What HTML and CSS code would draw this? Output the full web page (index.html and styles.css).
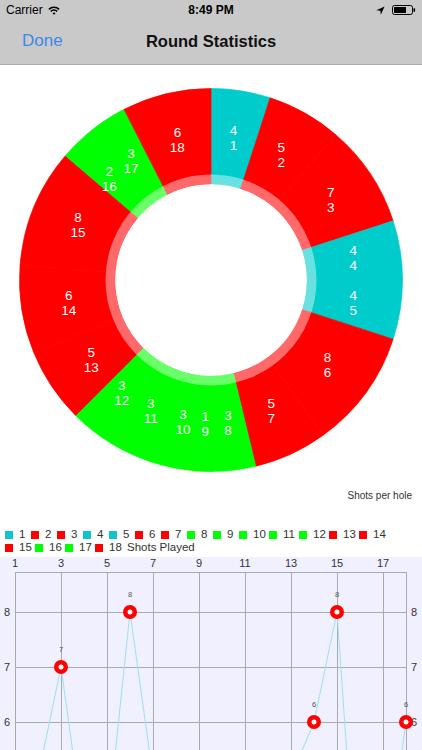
FILE: index.html
```html
<!DOCTYPE html>
<html lang="en">
<head>
<meta charset="utf-8">
<title>Round Statistics</title>
<link rel="stylesheet" href="styles.css">
</head>
<body>
<div class="screen">
  <div class="statusbar">
    <div class="sb-left">
      <span>Carrier</span>
      <svg class="wifi" width="12" height="9" viewBox="0 0 12 9">
        <path d="M0.9 3.4 A7.4 7.4 0 0 1 11.1 3.4" fill="none" stroke="#000" stroke-width="1.5"/>
        <path d="M2.8 5.4 A4.6 4.6 0 0 1 9.2 5.4" fill="none" stroke="#000" stroke-width="1.5"/>
        <path d="M4.5 7.2 L6 8.8 L7.5 7.2 A2.1 2.1 0 0 0 4.5 7.2 Z" fill="#000"/>
      </svg>
    </div>
    <div class="sb-time">8:49 PM</div>
    <div class="sb-right">
      <svg class="loc" width="9" height="9" viewBox="0 0 9 9">
        <path d="M0.3 4.2 L8.6 0.4 L4.8 8.7 L4.3 4.7 Z" fill="#000"/>
      </svg>
      <svg class="battery" width="24" height="10" viewBox="0 0 24 10">
        <rect x="0.5" y="0.5" width="20" height="9" rx="2" fill="none" stroke="#000" stroke-width="1"/>
        <rect x="2" y="2" width="12" height="6" fill="#000"/>
        <rect x="21.5" y="3.3" width="1.6" height="3.4" fill="#000"/>
      </svg>
    </div>
  </div>
  <div class="navbar">
    <span class="nav-done">Done</span>
    <h1 class="nav-title">Round Statistics</h1>
    <span></span>
  </div>

  <div class="donut-area">
    <svg id="donut" width="422" height="424" viewBox="0 0 422 424"></svg>
  </div>

  <div class="caption">Shots per hole</div>

  <div class="legend">
    <div class="item"><i class="sq cyan"></i>1</div>
    <div class="item"><i class="sq red"></i>2</div>
    <div class="item"><i class="sq red"></i>3</div>
    <div class="item"><i class="sq cyan"></i>4</div>
    <div class="item"><i class="sq cyan"></i>5</div>
    <div class="item"><i class="sq red"></i>6</div>
    <div class="item"><i class="sq red"></i>7</div>
    <div class="item"><i class="sq green"></i>8</div>
    <div class="item"><i class="sq green"></i>9</div>
    <div class="item wide"><i class="sq green"></i>10</div>
    <div class="item wide"><i class="sq green"></i>11</div>
    <div class="item wide"><i class="sq green"></i>12</div>
    <div class="item wide"><i class="sq red"></i>13</div>
    <div class="item wide"><i class="sq red"></i>14</div>
    <div class="item wide"><i class="sq red"></i>15</div>
    <div class="item wide"><i class="sq green"></i>16</div>
    <div class="item wide"><i class="sq green"></i>17</div>
    <div class="item wide"><i class="sq red"></i>18</div>
    <div class="legend-title">Shots Played</div>
  </div>

  <div class="linechart">
    <svg id="line" width="422" height="193" viewBox="0 0 422 193"></svg>
  </div>
</div>
<script src="script.js"></script>
</body>
</html>
```

FILE: styles.css
```css
* { box-sizing: border-box; }
html, body { margin: 0; padding: 0; }
body {
  width: 422px;
  height: 750px;
  overflow: hidden;
  background: #fff;
  font-family: "Liberation Sans", Arial, sans-serif;
  color: #000;
}
.screen {
  display: flex;
  flex-direction: column;
  height: 750px;
}
.statusbar {
  height: 20px;
  background: #c9c9c9;
  display: grid;
  grid-template-columns: 1fr auto 1fr;
  align-items: center;
  font-size: 12px;
  padding: 0 6px;
}
.sb-left { display: flex; align-items: center; gap: 5px; }
.sb-time { font-weight: bold; font-size: 12px; }
.sb-right { display: flex; align-items: center; justify-content: flex-end; gap: 7px; }
.navbar {
  height: 45px;
  background: #c9c9c9;
  border-bottom: 1px solid #acacac;
  display: grid;
  grid-template-columns: 1fr auto 1fr;
  align-items: center;
  padding-bottom: 2px;
}
.nav-done {
  padding-left: 22px;
  font-size: 17px;
  color: #3a8ae6;
}
.nav-title {
  margin: 0;
  font-size: 16.5px;
  font-weight: bold;
  color: #111;
}
.donut-area {
  height: 423px;
}
.donut-area svg { display: block; }
.slice-label {
  fill: #fff;
  font-size: 13.5px;
  font-family: "Liberation Sans", Arial, sans-serif;
  text-anchor: middle;
}
.caption {
  height: 16px;
  line-height: 16px;
  text-align: right;
  padding-right: 10px;
  font-size: 10px;
  color: #333;
}
.legend {
  margin-top: 24px;
  padding: 0 5px 3px 5px;
  display: flex;
  flex-wrap: wrap;
  font-size: 11.5px;
  line-height: 13px;
  color: #333;
}
.item {
  display: flex;
  align-items: center;
  width: 26px;
}
.item.wide { width: 30px; }
.sq {
  display: inline-block;
  width: 8px;
  height: 8px;
  margin-right: 6px;
}
.sq.cyan { background: #10c4cc; }
.sq.red { background: #ff0000; }
.sq.green { background: #00ff00; }
.legend-title { margin-left: 2px; }
.linechart {
  flex: 1;
  background: #f0f0ff;
}
.linechart svg { display: block; }
.axis-label {
  font-size: 11px;
  fill: #333;
  font-family: "Liberation Sans", Arial, sans-serif;
}
.value-label {
  font-size: 7.5px;
  fill: #555;
  text-anchor: middle;
  font-family: "Liberation Sans", Arial, sans-serif;
}
```

FILE: script.js
```js
(function () {
  var vals = [4, 5, 7, 4, 4, 8, 5, 3, 1, 3, 3, 3, 5, 6, 8, 2, 3, 6];
  var NS = 'http://www.w3.org/2000/svg';
  function col(v) { return v <= 3 ? '#00ff00' : (v === 4 ? '#00cccc' : '#ff0000'); }
  function el(tag, attrs, parent, text) {
    var e = document.createElementNS(NS, tag);
    for (var k in attrs) e.setAttribute(k, attrs[k]);
    if (text !== undefined) e.textContent = text;
    parent.appendChild(e);
    return e;
  }

  /* donut */
  var d = document.getElementById('donut');
  var cx = 211, cy = 215, R = 191.5, r0 = 96, rt = 105.5, rl = 144;
  var total = vals.reduce(function (a, b) { return a + b; }, 0);
  function pt(rad, a) { return [cx + rad * Math.sin(a), cy - rad * Math.cos(a)]; }
  var gS = el('g', {}, d), gSeam = el('g', {}, d), gR = el('g', {}, d), gL = el('g', {}, d);
  var acc = 0;
  vals.forEach(function (v, i) {
    var a0 = acc / total * 2 * Math.PI;
    acc += v;
    var a1 = acc / total * 2 * Math.PI;
    var large = (a1 - a0) > Math.PI ? 1 : 0;
    var p0 = pt(R, a0), p1 = pt(R, a1), p2 = pt(r0, a1), p3 = pt(r0, a0);
    el('path', {
      d: 'M' + p0[0] + ' ' + p0[1] + 'A' + R + ' ' + R + ' 0 ' + large + ' 1 ' + p1[0] + ' ' + p1[1] +
        'L' + p2[0] + ' ' + p2[1] + 'A' + r0 + ' ' + r0 + ' 0 ' + large + ' 0 ' + p3[0] + ' ' + p3[1] + 'Z',
      fill: col(v), stroke: col(v), 'stroke-width': 0.7, 'stroke-linejoin': 'bevel'
    }, gS);
    var s0 = pt(r0, a0), s1 = pt(R - 0.5, a0);
    el('line', { x1: s0[0], y1: s0[1], x2: s1[0], y2: s1[1], stroke: '#000', 'stroke-opacity': 0.04, 'stroke-width': 0.6 }, gSeam);
    var am = (a0 + a1) / 2, lp = pt(rl, am);
    var t = el('text', { 'class': 'slice-label' }, gL);
    el('tspan', { x: lp[0], y: lp[1] - 2.6 }, t, String(v));
    el('tspan', { x: lp[0], y: lp[1] + 12.4 }, t, String(i + 1));
  });
  el('circle', { cx: cx, cy: cy, r: (r0 + rt) / 2, fill: 'none', stroke: '#fff', 'stroke-opacity': 0.41, 'stroke-width': rt - r0 }, gR);
  el('circle', { cx: cx, cy: cy, r: r0 - 0.2, fill: '#fff' }, gR);

  /* line chart */
  var s = document.getElementById('line');
  var H = 193;
  var left = 15, right = 406, top = 15, step = 23;
  function hx(h) { return left + (h - 1) * step; }
  function vy(v) { return 495 - 55 * v; }
  var grid = el('g', { stroke: '#a9a9b2', 'stroke-width': 1 }, s);
  for (var h = 1; h <= 17; h += 2) {
    el('line', { x1: hx(h) + 0.5, y1: top, x2: hx(h) + 0.5, y2: H }, grid);
    el('text', { x: hx(h), y: 10, 'class': 'axis-label', 'text-anchor': 'middle' }, s, String(h));
  }
  el('line', { x1: right + 0.5, y1: top, x2: right + 0.5, y2: H }, grid);
  el('line', { x1: left, y1: top + 0.5, x2: right + 1, y2: top + 0.5 }, grid);
  [8, 7, 6].forEach(function (v) {
    var y = vy(v);
    el('line', { x1: left, y1: y + 0.5, x2: right + 1, y2: y + 0.5 }, grid);
    el('text', { x: 4, y: y + 4, 'class': 'axis-label' }, s, String(v));
    el('text', { x: 411, y: y + 4, 'class': 'axis-label' }, s, String(v));
  });
  var pts = vals.map(function (v, i) { return hx(i + 1) + ',' + vy(v); }).join(' ');
  el('polyline', { points: pts, fill: 'none', stroke: '#a4e0f4', 'stroke-width': 1.1 }, s);
  vals.forEach(function (v, i) {
    var x = hx(i + 1), y = vy(v);
    if (y - 10 > H) return; /* point lies below the visible part of the chart */
    el('circle', { cx: x, cy: y, r: 4.75, fill: '#fff', stroke: '#ff0000', 'stroke-width': 4.5 }, s);
    el('text', { x: x, y: y - 15, 'class': 'value-label' }, s, String(v));
  });
})();
```
